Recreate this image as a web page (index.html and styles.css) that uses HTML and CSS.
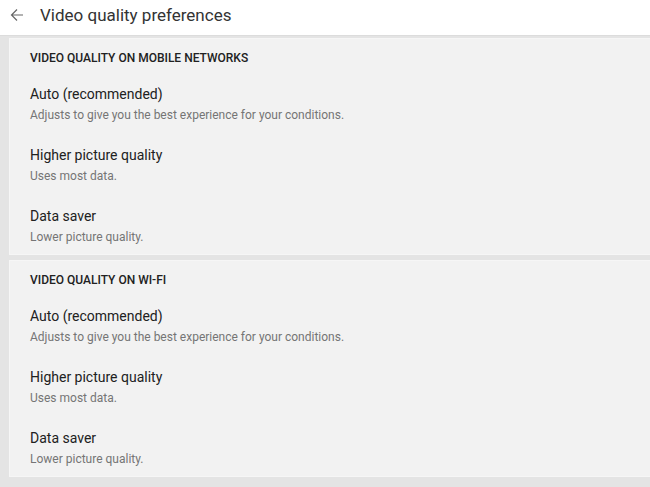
FILE: index.html
```html
<!DOCTYPE html>
<html lang="en">
<head>
    <meta charset="UTF-8">
    <meta name="viewport" content="width=device-width, initial-scale=1.0">
    <title>Video quality preferences</title>
    <link rel="stylesheet" href="styles.css">
</head>
<body>
    <div class="topbar">
        <svg class="back" width="14" height="14" viewBox="0 0 14 14">
            <path d="M13 7H1.5M7 1.5L1.5 7L7 12.5" fill="none" stroke="#666" stroke-width="1.2"/>
        </svg>
        <h1>Video quality preferences</h1>
    </div>
    <div class="content">
        <div class="card">
            <div class="section-title">VIDEO QUALITY ON MOBILE NETWORKS</div>
            <div class="item">
                <div class="item-title">Auto (recommended)</div>
                <div class="item-sub">Adjusts to give you the best experience for your conditions.</div>
            </div>
            <div class="item">
                <div class="item-title">Higher picture quality</div>
                <div class="item-sub">Uses most data.</div>
            </div>
            <div class="item">
                <div class="item-title">Data saver</div>
                <div class="item-sub">Lower picture quality.</div>
            </div>
        </div>
        <div class="card">
            <div class="section-title">VIDEO QUALITY ON WI-FI</div>
            <div class="item">
                <div class="item-title">Auto (recommended)</div>
                <div class="item-sub">Adjusts to give you the best experience for your conditions.</div>
            </div>
            <div class="item">
                <div class="item-title">Higher picture quality</div>
                <div class="item-sub">Uses most data.</div>
            </div>
            <div class="item">
                <div class="item-title">Data saver</div>
                <div class="item-sub">Lower picture quality.</div>
            </div>
        </div>
    </div>
</body>
</html>
```

FILE: styles.css
```css
body {
    font-family: Roboto, "Liberation Sans", sans-serif;
    background-color: #e4e4e4;
    margin: 0;
    padding: 0;
}
.topbar {
    display: flex;
    align-items: center;
    height: 29px;
    background-color: #fff;
    border-bottom: 1px solid #dcdcdc;
    padding: 0 0 6px 10px;
}
.back {
    margin-right: 16px;
}
h1 {
    font-size: 17px;
    font-weight: 400;
    color: #333;
    margin: 0;
}
.content {
    display: flex;
    flex-direction: column;
    gap: 5px;
    padding: 2px 0 0 9px;
}
.card {
    box-sizing: border-box;
    background-color: #f2f2f2;
    border: 1px solid #f6f6f6;
    border-right: none;
    height: 217px;
    padding: 9px 0 0 20px;
}
.section-title {
    font-size: 12px;
    font-weight: 500;
    line-height: 20px;
    color: #212121;
}
.item {
    padding: 16px 0 6px;
}
.item-title {
    font-size: 14px;
    line-height: 20px;
    color: #212121;
}
.item-sub {
    font-size: 12px;
    line-height: 16px;
    margin-top: 3px;
    color: #757575;
}
```
